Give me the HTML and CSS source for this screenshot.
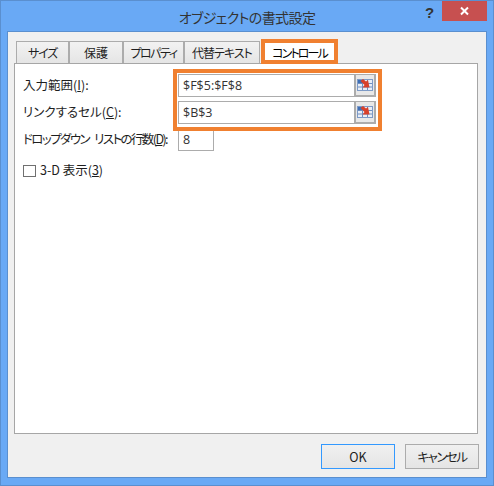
FILE: index.html
```html
<!DOCTYPE html>
<html lang="ja">
  <head>
    <meta charset="UTF-8" />
    <title>オブジェクトの書式設定</title>
    <link rel="stylesheet" href="styles.css">
  </head>
  <body>
    <div class="window">
      <!-- Title bar -->
      <div class="titlebar">
        <span class="title">オブジェクトの書式設定</span>
        <span class="help">?</span>
        <span class="close">
          <svg width="10" height="10" viewBox="0 0 10 10">
            <path d="M1 1.5 L8 8.5 M8 1.5 L1 8.5" stroke="#fff" stroke-width="2" />
          </svg>
        </span>
      </div>

      <div class="client">
        <!-- Tabs -->
        <div class="tabs">
          <div class="tab tab-size">サイズ</div>
          <div class="tab tab-protect">保護</div>
          <div class="tab tab-prop">プロパティ</div>
          <div class="tab tab-alt">代替テキスト</div>
          <div class="tab tab-active">コントロール</div>
        </div>

        <!-- Control page -->
        <div class="panel">
          <span class="label">入力範囲(<u>I</u>):</span>
          <div class="ref-field">
            <span class="ref-input">$F$5:$F$8</span>
            <span class="ref-btn">
              <svg width="16" height="14" viewBox="0 0 16 14">
                <rect x="0.5" y="1.5" width="15" height="11" fill="#e9eef6" stroke="#7d9ac6" />
                <rect x="1" y="2" width="6" height="3" fill="#3f6fb5" />
                <path d="M1 5.5 H15 M1 9 H15 M5.5 5 V12 M10.5 2 V12" stroke="#6f8fc0" fill="none" />
                <path d="M3.5 3 L6 1 L9 3.5 L11 2 L12.5 9.5 L5.5 9.5 L7.5 7 Z" fill="#d8402a" />
              </svg>
            </span>
          </div>
          <span class="label">リンクするセル(<u>C</u>):</span>
          <div class="ref-field">
            <span class="ref-input">$B$3</span>
            <span class="ref-btn">
              <svg width="16" height="14" viewBox="0 0 16 14">
                <rect x="0.5" y="1.5" width="15" height="11" fill="#e9eef6" stroke="#7d9ac6" />
                <rect x="1" y="2" width="6" height="3" fill="#3f6fb5" />
                <path d="M1 5.5 H15 M1 9 H15 M5.5 5 V12 M10.5 2 V12" stroke="#6f8fc0" fill="none" />
                <path d="M3.5 3 L6 1 L9 3.5 L11 2 L12.5 9.5 L5.5 9.5 L7.5 7 Z" fill="#d8402a" />
              </svg>
            </span>
          </div>
          <span class="label label-rows">ドロップダウン リストの行数(<u>D</u>):</span>
          <span class="num-input">8</span>
          <div class="check-row">
            <span class="checkbox"></span>
            <span class="label">3-D 表示(<u>3</u>)</span>
          </div>
        </div>

        <div class="actions">
          <div class="btn btn-default">OK</div>
          <div class="btn btn-cancel">キャンセル</div>
        </div>
      </div>

      <!-- Orange callouts -->
      <div class="mark mark-tab"></div>
      <div class="mark mark-fields"></div>
    </div>
  </body>
</html>
```

FILE: styles.css
```css
* {
  box-sizing: border-box;
}
html,
body {
  margin: 0;
  height: 100%;
}
body {
  font-family: "Noto Sans CJK JP", "Open Sans", sans-serif;
  font-feature-settings: "palt";
  font-size: 12.5px;
  color: #1e1e1e;
}
.window {
  position: relative;
  width: 494px;
  height: 486px;
  background-color: #69a9f5;
  border: 1px solid #5a8fcf;
  display: flex;
  flex-direction: column;
  padding: 0 6px 7px;
}
.titlebar {
  height: 30px;
  flex: none;
  display: flex;
  justify-content: center;
  align-items: center;
  position: relative;
}
.title {
  font-size: 14px;
  letter-spacing: -0.6px;
  color: #333;
  padding-top: 1px;
}
.help {
  position: absolute;
  left: 418px;
  top: 3px;
  font: bold 15px "Liberation Sans", sans-serif;
  color: #333;
}
.close {
  position: absolute;
  left: 435px;
  top: 0;
  width: 45px;
  height: 20px;
  background-color: #c75050;
  display: flex;
  justify-content: center;
  align-items: center;
}
.client {
  flex: 1;
  background-color: #f0f0f0;
  border: 1px solid #5a8fcf;
  padding: 9px 8px 0 6px;
  display: flex;
  flex-direction: column;
}
.tabs {
  display: flex;
  height: 22px;
  flex: none;
  padding-left: 2px;
}
.tab {
  height: 22px;
  font-size: 12px;
  background: linear-gradient(#f2f2f2, #e5e5e5);
  border: 1px solid #acacac;
  border-bottom: none;
  display: flex;
  justify-content: center;
  align-items: center;
}
.tab-size {
  width: 53px;
  letter-spacing: -1.2px;
}
.tab-protect {
  width: 54px;
}
.tab-prop {
  width: 61px;
  letter-spacing: -1.5px;
}
.tab-alt {
  width: 76px;
  letter-spacing: -1px;
}
.tab-active {
  width: 77px;
  margin-left: 1px;
  background: #fff;
  border: none;
  color: #000;
  letter-spacing: -1.9px;
}
.panel {
  height: 371px;
  flex: none;
  background-color: #fff;
  border: 1px solid #a6a6a6;
  padding: 10px 0 0 8px;
  display: grid;
  grid-template-columns: 155px 198px;
  grid-auto-rows: min-content;
  row-gap: 4px;
  align-items: center;
}
.label {
  white-space: nowrap;
  padding-bottom: 3px;
}
.label-rows {
  letter-spacing: -1.6px;
  word-spacing: 4px;
}
.ref-field {
  height: 23px;
  display: flex;
}
.ref-input {
  flex: 1;
  border: 1px solid #acacac;
  border-right: none;
  font-family: "Open Sans", sans-serif;
  font-size: 12.5px;
  color: #333;
  padding-left: 4px;
  line-height: 21px;
}
.ref-btn {
  width: 22px;
  background-color: #e8e8e8;
  border: 2px solid #acacac;
  border-top-width: 1px;
  display: flex;
  align-items: center;
  justify-content: center;
}
.num-input {
  width: 36px;
  height: 23px;
  border: 1px solid #acacac;
  font-family: "Open Sans", sans-serif;
  font-size: 12.5px;
  color: #333;
  padding-left: 4px;
  line-height: 21px;
}
.check-row {
  grid-column: 1 / -1;
  height: 13px;
  margin-top: 9px;
  display: flex;
  align-items: center;
  gap: 4px;
}
.checkbox {
  width: 13px;
  height: 12px;
  background-color: #fff;
  border: 1px solid #707070;
}
.actions {
  display: flex;
  justify-content: flex-end;
  gap: 10px;
  margin-top: 10px;
  margin-right: -1px;
}
.btn {
  width: 74px;
  height: 25px;
  background: linear-gradient(#f0f0f0, #e5e5e5);
  border: 1px solid #acacac;
  display: flex;
  justify-content: center;
  align-items: center;
}
.btn-default {
  border: 1px solid #3399ff;
}
.btn-cancel {
  letter-spacing: -1.5px;
}
.mark {
  position: absolute;
  border: 4px solid #f08030;
}
.mark-tab {
  left: 260px;
  top: 38px;
  width: 77px;
  height: 25px;
}
.mark-fields {
  left: 172px;
  top: 68px;
  width: 209px;
  height: 62px;
}
```
